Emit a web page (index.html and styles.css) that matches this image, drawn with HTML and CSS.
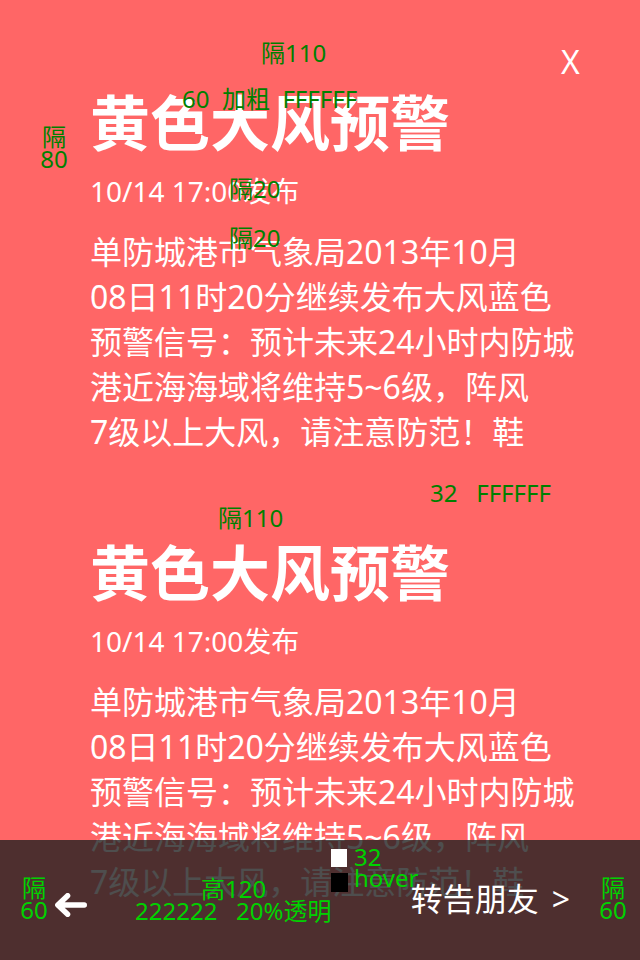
FILE: index.html
```html
<!DOCTYPE html>
<html lang="zh-CN">
<head>
<meta charset="utf-8">
<title>黄色大风预警</title>
<link rel="stylesheet" href="styles.css">
</head>
<body>
<main class="page">
  <article class="alert">
    <h1 class="alert-title">黄色大风预警</h1>
    <p class="alert-time">10/14 17:00发布</p>
    <p class="alert-text">单防城港市气象局2013年10月<br>08日11时20分继续发布大风蓝色<br>预警信号：预计未来24小时内防城<br>港近海海域将维持5~6级，阵风<br>7级以上大风，请注意防范！鞋</p>
  </article>
  <article class="alert">
    <h1 class="alert-title">黄色大风预警</h1>
    <p class="alert-time">10/14 17:00发布</p>
    <p class="alert-text">单防城港市气象局2013年10月<br>08日11时20分继续发布大风蓝色<br>预警信号：预计未来24小时内防城<br>港近海海域将维持5~6级，阵风<br>7级以上大风，请注意防范！鞋</p>
  </article>
</main>

<span class="close">X</span>

<footer class="bar">
  <svg class="back" width="32" height="24" viewBox="0 0 32 24" aria-label="返回">
    <path d="M29.3 12 H3 M12.6 2.7 L2.8 12 L12.6 21.3" fill="none" stroke="#fff" stroke-width="5.4" stroke-linecap="round" stroke-linejoin="round"/>
  </svg>
  <a class="share">转告朋友<span class="chev">&gt;</span></a>
</footer>

<div class="note note-top1">隔110</div>
<div class="note note-title1">60  加粗  FFFFFF</div>
<div class="note note-left80 stack">隔<br>80</div>
<div class="note note-gap1">隔20</div>
<div class="note note-gap2">隔20</div>
<div class="note note-body">32   FFFFFF</div>
<div class="note note-top2">隔110</div>

<div class="swatch swatch-white"></div>
<div class="swatch swatch-black"></div>
<div class="note bright note-32">32</div>
<div class="note bright note-hover">hover</div>
<div class="note bright note-h120">高120</div>
<div class="note bright note-bg">222222   20%透明</div>
<div class="note bright stack note-l60">隔<br>60</div>
<div class="note bright stack note-r60">隔<br>60</div>
</body>
</html>
```
FILE: styles.css
```css
html, body {
  margin: 0;
  padding: 0;
}
body {
  position: relative;
  width: 640px;
  height: 960px;
  overflow: hidden;
  background: #ff6666;
  color: #ffffff;
  font-family: "Noto Sans", "Noto Sans CJK SC", sans-serif;
}
.page {
  padding: 88px 0 0 90px;
}
.alert {
  margin-bottom: 84px;
}
.alert-title {
  margin: 0 0 13px;
  font-size: 60px;
  line-height: 70px;
  font-weight: 700;
}
.alert-time {
  margin: 0 0 18px;
  font-size: 28px;
  line-height: 40px;
}
.alert-text {
  margin: 0;
  font-size: 32px;
  line-height: 45px;
  white-space: nowrap;
}
.close {
  position: absolute;
  left: 561px;
  top: 46px;
  font-size: 32px;
  line-height: 32px;
  color: #fff;
}
.bar {
  position: absolute;
  left: 0;
  right: 0;
  bottom: 0;
  height: 120px;
  box-sizing: border-box;
  padding: 0 70px 0 55px;
  background: rgba(34, 34, 34, 0.8);
  display: flex;
  align-items: center;
  justify-content: space-between;
}
.back {
  display: block;
  margin-top: 10px;
}
.share {
  font-size: 32px;
  line-height: 32px;
  color: #fff;
  margin-bottom: 3px;
}
.chev {
  margin-left: 13px;
}
.note {
  position: absolute;
  font-size: 24px;
  line-height: 24px;
  color: #008000;
  white-space: pre;
  z-index: 5;
}
.note.bright {
  color: #00d200;
}
.stack {
  width: 28px;
  text-align: center;
  line-height: 22px;
}
.note-top1 { left: 261px; top: 41px; }
.note-title1 { left: 182px; top: 87px; }
.note-left80 { left: 40px; top: 126px; }
.note-gap1 { left: 229px; top: 177px; }
.note-gap2 { left: 229px; top: 226px; }
.note-body { left: 430px; top: 481px; }
.note-top2 { left: 218px; top: 506px; }
.note-32 { left: 354px; top: 845px; }
.note-hover { left: 354px; top: 866px; }
.note-h120 { left: 201px; top: 877px; }
.note-bg { left: 135px; top: 899px; }
.note-l60 { left: 20px; top: 877px; }
.note-r60 { left: 599px; top: 877px; }
.swatch {
  position: absolute;
  left: 331px;
  z-index: 5;
}
.swatch-white {
  top: 849px;
  width: 16px;
  height: 18px;
  background: #fff;
}
.swatch-black {
  top: 873px;
  width: 17px;
  height: 19px;
  background: #000;
}
```
